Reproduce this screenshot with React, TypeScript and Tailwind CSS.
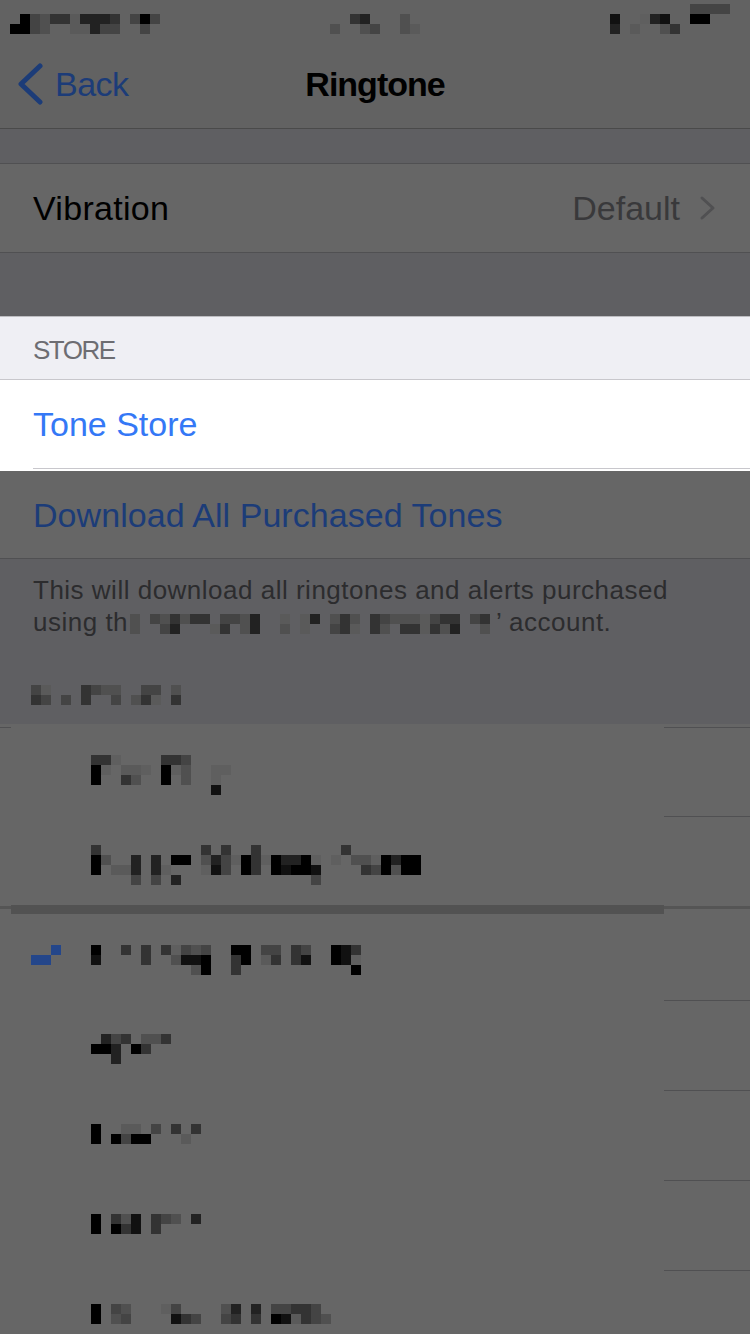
import React from 'react';

const PAL: Record<string, string> = {
  '0': '#000000',
  '1': '#111111',
  '2': '#222222',
  '3': '#333333',
  '4': '#444444',
  '5': '#505050',
  '6': '#5a5a5a',
  '7': '#5f5f5f',
  b: '#24468a',
};

function Mosaic({ rows, className = '' }: { rows: string[]; className?: string }) {
  return (
    <div className={'flex flex-col shrink-0 ' + className}>
      {rows.map((r, i) => (
        <div key={i} className="flex">
          {r.split('').map((c, j) => (
            <div
              key={j}
              className="w-[10px] h-[10px]"
              style={{ backgroundColor: c === '.' ? 'transparent' : PAL[c] }}
            />
          ))}
        </div>
      ))}
    </div>
  );
}

function Sep() {
  return <div className="h-px ml-[664px] bg-[#505052]" />;
}

export default function App() {
  return (
    <div className="w-[750px] h-[1334px] overflow-hidden bg-[#5f5f62] font-['Liberation_Sans',Arial,sans-serif]">
      {/* status bar */}
      <div className="h-[40px] bg-[#626262] flex items-start">
        <Mosaic className="ml-[10px] mt-[14px]" rows={['.0453362223.404', '0045..66244..4.']} />
        <Mosaic className="ml-[170px] mt-[14px]" rows={['..32...5.', '5..54..56']} />
        <Mosaic className="ml-[190px] mt-[4px]" rows={['........4444', '1..721..00..', '2.6..53.....']} />
      </div>

      {/* nav bar */}
      <div className="h-[89px] bg-[#626262] border-b border-[#4a4a4a] grid grid-cols-[1fr_auto_1fr] items-center">
        <div className="flex items-center">
          <svg className="ml-[17px]" width="26" height="44" viewBox="0 0 26 44">
            <path d="M23 4 L4 22 L23 40" fill="none" stroke="#1c3c78" strokeWidth="5" strokeLinecap="round" strokeLinejoin="round" />
          </svg>
          <span className="ml-[12px] text-[34px] leading-none text-[#1c3c78] tracking-[-0.5px]">Back</span>
        </div>
        <div className="text-[34px] leading-none font-bold text-black tracking-[-1px]">Ringtone</div>
        <div />
      </div>

      <div className="h-[34px]" />
      <div className="h-px bg-[#505052]" />
      <div className="h-[88px] bg-[#666666] flex items-center justify-between pl-[33px] pr-[33px]">
        <span className="text-[34px] leading-none text-black tracking-[0.3px]">Vibration</span>
        <div className="flex items-center">
          <span className="text-[34px] leading-none text-[#39393b]">Default</span>
          <svg className="ml-[19px]" width="18" height="26" viewBox="0 0 18 26">
            <path d="M3 3 L14 13 L3 23" fill="none" stroke="#505052" strokeWidth="3" strokeLinecap="round" strokeLinejoin="round" />
          </svg>
        </div>
      </div>
      <div className="h-px bg-[#505052]" />
      <div className="h-[63px]" />

      {/* highlighted store section */}
      <div className="h-px bg-[#bdbdc1]" />
      <div className="h-[62px] bg-[#efeff4] flex items-center pl-[33px] pt-[4px]">
        <span className="text-[26px] leading-none text-[#6d6d72] tracking-[-1.5px]">STORE</span>
      </div>
      <div className="h-px bg-[#c8c7cc]" />
      <div className="h-[88px] bg-white flex items-center pl-[33px]">
        <span className="text-[34px] leading-none text-[#3478f6]">Tone Store</span>
      </div>
      <div className="bg-white pl-[33px]">
        <div className="h-px bg-[#c8c7cc]" />
      </div>
      <div className="h-[2px] bg-white" />

      <div className="h-[87px] bg-[#666666] flex items-center pl-[33px]">
        <span className="text-[34px] leading-none text-[#1c3c78] tracking-[0.05px]">Download All Purchased Tones</span>
      </div>
      <div className="h-px bg-[#505052]" />

      {/* footer */}
      <div className="pt-[15px] pl-[33px] text-[26px] leading-[32px] text-[#2c2c2e] tracking-[0.5px]">
        <div>This will download all ringtones and alerts purchased</div>
        <div className="flex items-start h-[32px]">
          <span className="w-[97px] shrink-0 overflow-hidden whitespace-nowrap">using th</span>
          <Mosaic
            className="mt-[8px]"
            rows={['5.453533.4452..6.62.535.345556433.43', '5..42...63.52..5.6..436.35.336352..5']}
          />
          <span className="ml-[6px] whitespace-nowrap">{'\u2019 account.'}</span>
        </div>
      </div>

      {/* section header (pixelated) */}
      <Mosaic className="ml-[31px] mt-[47px]" rows={['46...3455..44.5', '34.4.3..4.536.3']} />
      <div className="h-[19px]" />

      {/* list */}
      <div className="bg-[#666666]">
        <div className="h-[3px]" />
        <div className="flex h-px">
          <div className="w-[11px] bg-[#505052]" />
          <div className="w-[653px]" />
          <div className="flex-1 bg-[#505052]" />
        </div>

        <div className="h-[88px] pt-[27px] pl-[91px] flex items-start">
          <Mosaic rows={['337....334....', '07.667.075..77', '0..35..0.5..7.', '............1.']} />
        </div>
        <Sep />
        <div className="h-[88px] pt-[28px] pl-[91px] flex items-start">
          <Mosaic
            rows={[
              '3..........3.3..3........3.......',
              '05..2.2.00.524703702207.7.5570200',
              '0.662.27...714.03.01001....340500',
              '....4.4.2.............4..........',
            ]}
          />
        </div>
        <div className="flex h-[9px]">
          <div className="w-[11px] flex flex-col">
            <div className="h-px" />
            <div className="h-[3px] bg-[#555555]" />
          </div>
          <div className="w-[653px] bg-[#525252]" />
          <div className="flex-1 flex flex-col">
            <div className="h-px" />
            <div className="h-[3px] bg-[#555555]" />
          </div>
        </div>
        <div className="h-[86px] pt-[31px] pl-[31px] flex items-start">
          <Mosaic rows={['..b', 'bb.']} />
          <Mosaic
            className="ml-[30px]"
            rows={['0..3.3.37454..00.44.34..013', '1....3..5110..30.63.31..017', '..........50..3...........0']}
          />
        </div>
        <Sep />
        <div className="h-[89px] pt-[33px] pl-[91px] flex items-start">
          <Mosaic rows={['.243.553', '002.03..', '..2.....']} />
        </div>
        <Sep />
        <div className="h-[89px] pt-[33px] pl-[91px] flex items-start">
          <Mosaic rows={['0..66.4.3.3', '0.0400...6.']} />
        </div>
        <Sep />
        <div className="h-[89px] pt-[33px] pl-[91px] flex items-start">
          <Mosaic rows={['0.351.345.2', '0.031.3....']} />
        </div>
        <Sep />
        <div className="h-[89px] pt-[33px] pl-[91px] flex items-start">
          <Mosaic rows={['0.45...74....52.2.44334.', '0.54....134..43.3.016345']} />
        </div>
      </div>
    </div>
  );
}
